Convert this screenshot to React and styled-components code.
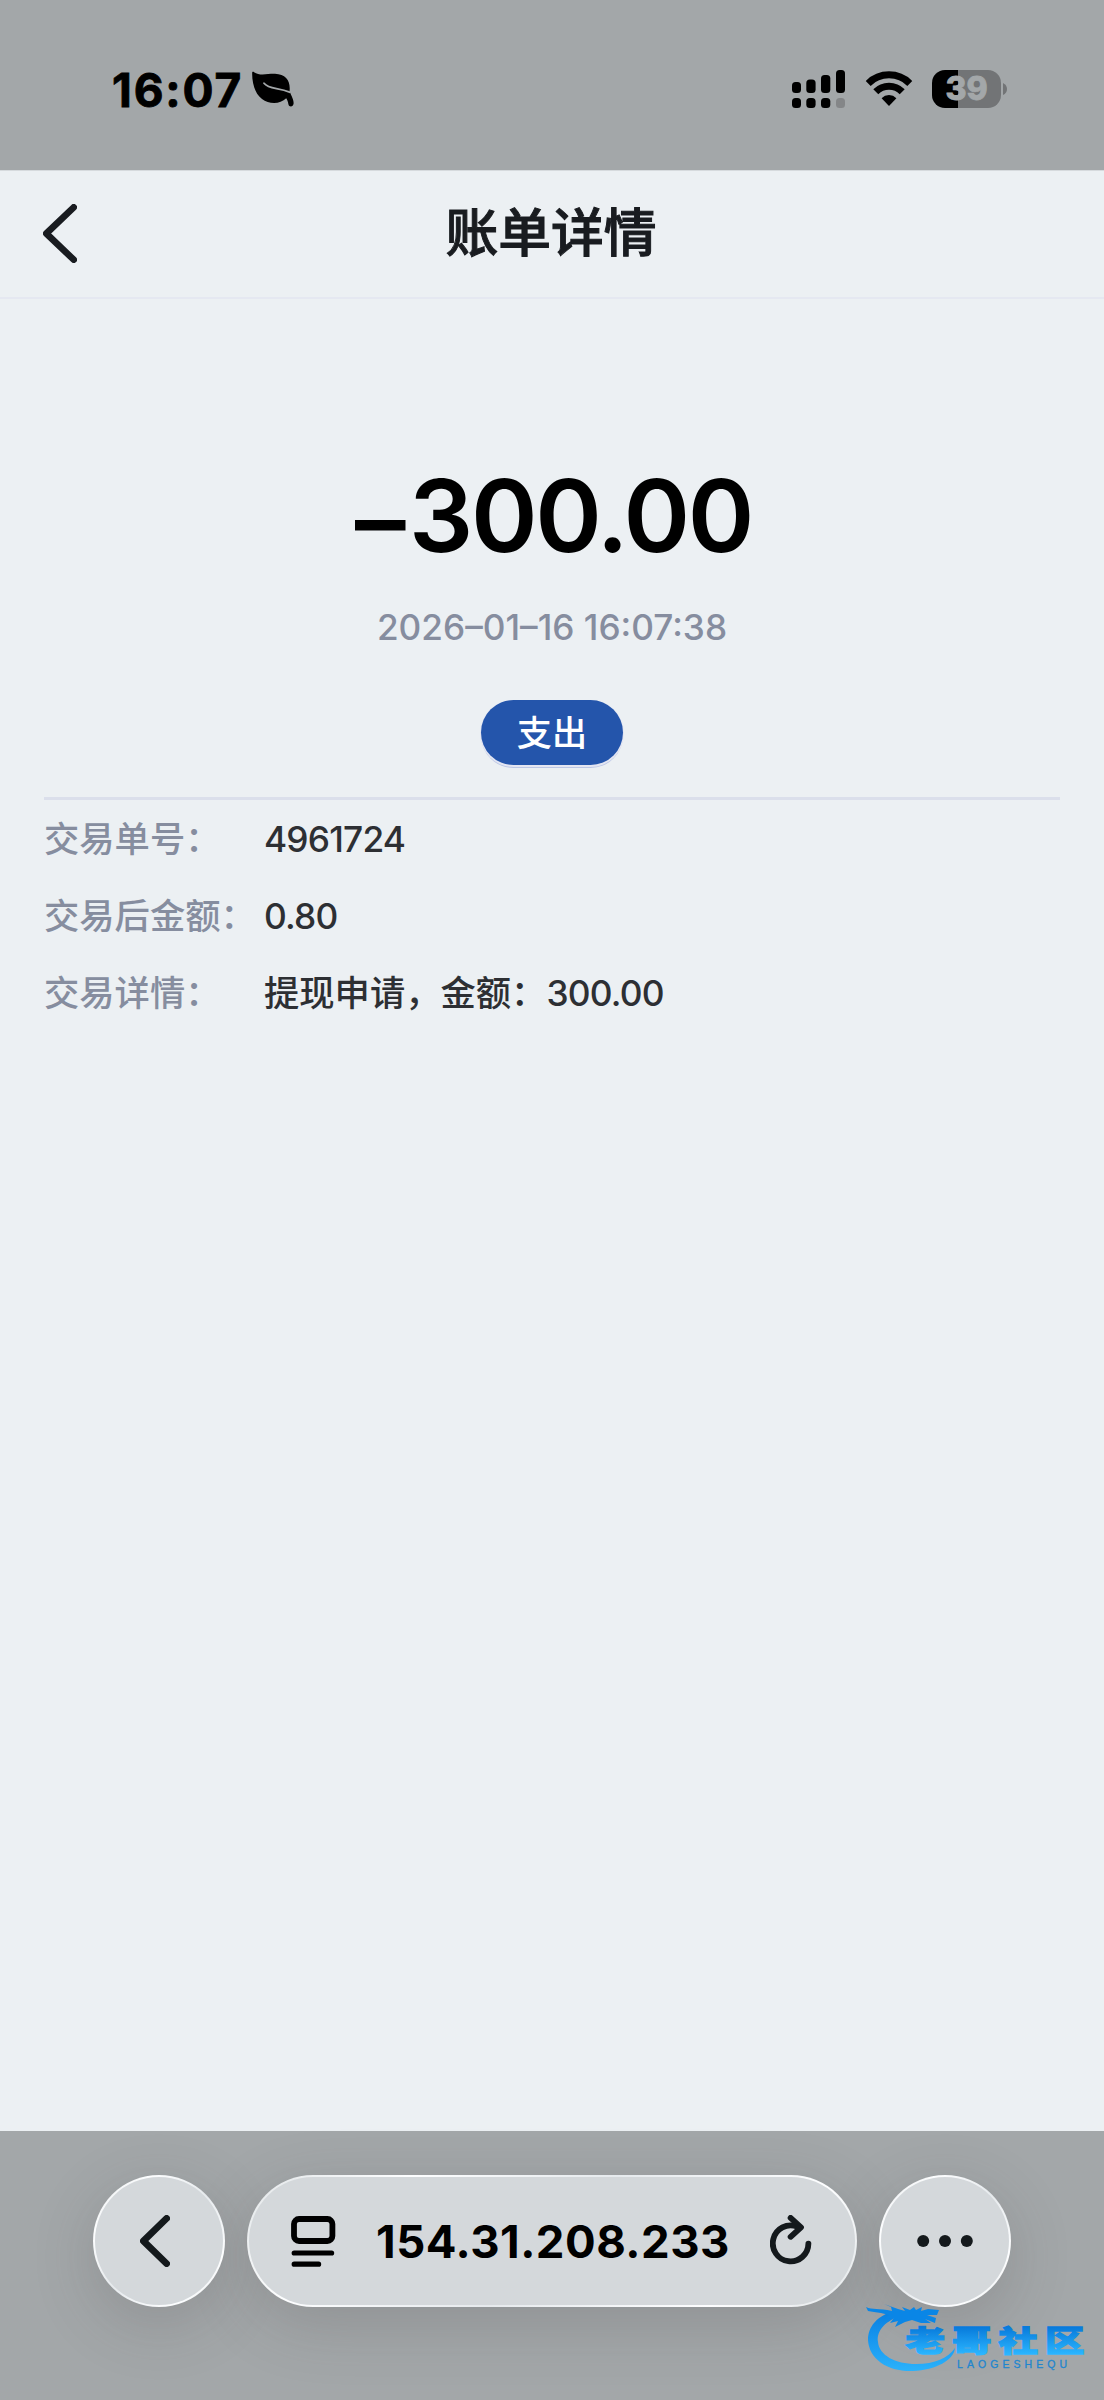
import React from "react";
import styled, { createGlobalStyle } from "styled-components";

const Global = createGlobalStyle`
  * { box-sizing: border-box; }
  body {
    margin: 0;
    background: #ecf0f3;
    font-family: Inter, "Noto Sans CJK SC", sans-serif;
    -webkit-font-smoothing: antialiased;
  }
`;

const Screen = styled.div`
  display: flex;
  flex-direction: column;
  width: 1104px;
  height: 2400px;
  overflow: hidden;
  background: #ecf0f3;
`;

const StatusBar = styled.div`
  display: flex;
  align-items: center;
  justify-content: space-between;
  height: 170px;
  padding: 8px 97px 0 112px;
  background: #a3a7a9;
`;

const StatusGroup = styled.div`
  display: flex;
  align-items: center;
  gap: ${(p) => p.$gap}px;
`;

const Clock = styled.span`
  padding-top: 2px;
  font-size: 46px;
  line-height: 56px;
  font-weight: 700;
  letter-spacing: ${(p) => p.$spacing}px;
  color: #000;
  -webkit-text-stroke: 0.8px #000;
`;

const Battery = styled.div`
  display: flex;
  align-items: center;
  gap: 2px;
`;

const BatteryBody = styled.div`
  display: flex;
  align-items: center;
  justify-content: center;
  width: 69px;
  height: 38px;
  border-radius: 13px;
  background: linear-gradient(90deg, #000 26px, #727476 26px);
  color: #a3a7a9;
  font-size: 32px;
  line-height: 38px;
  font-weight: 800;
  -webkit-text-stroke: 0.8px #a3a7a9;
`;

const Header = styled.header`
  display: grid;
  grid-template-columns: 120px 1fr 120px;
  align-items: center;
  height: 129px;
  padding-bottom: 2px;
  border-top: 1px solid #d6dadd;
  border-bottom: 2px solid #e5e8f1;
`;

const BackSlot = styled.div`
  display: flex;
  padding-left: 43px;
`;

const Title = styled.h1`
  margin: 0 2px 0 0;
  text-align: center;
  font-size: 52.8px;
  line-height: 76px;
  font-weight: 500;
  -webkit-text-stroke: 1px #191c20;
  color: #191c20;
`;

const Main = styled.main`
  display: flex;
  flex-direction: column;
  flex: 1;
  padding: 155px 44px 0;
`;

const Summary = styled.section`
  display: flex;
  flex-direction: column;
  align-items: center;
  height: 346px;
  border-bottom: 3px solid #dbdfeb;
`;

const Amount = styled.div`
  display: flex;
  gap: 6px;
  height: 122px;
  padding-left: 3px;
  font-size: 101px;
  line-height: 122px;
  font-weight: 600;
  letter-spacing: -2.4px;
  color: #000;
`;

const Sign = styled.span`
  padding-top: 4px;
`;

const Timestamp = styled.div`
  margin-top: 29px;
  font-size: 35.2px;
  line-height: 44px;
  font-weight: 500;
  color: #868d9f;
`;

const Badge = styled.div`
  display: flex;
  align-items: center;
  justify-content: center;
  width: 142px;
  height: 65px;
  margin-top: 51px;
  border-radius: 33px;
  background: #2455ab;
  box-shadow: 0 1px 0 1px #e4e6f2, 0 3px 0 0 #bcc7e5;
  color: #fff;
  font-size: 35.2px;
  line-height: 60px;
  font-weight: 500;
`;

const Details = styled.dl`
  display: flex;
  flex-direction: column;
  margin: 1px 0 0;
`;

const DetailRow = styled.div`
  display: grid;
  grid-template-columns: 220px 1fr;
  align-items: center;
  height: 77.4px;
  font-size: 35.3px;
  line-height: 50px;
  font-weight: 500;
`;

const Label = styled.dt`
  color: #868d9f;
  white-space: nowrap;
`;

const Value = styled.dd`
  margin: 0;
  color: #2d2f33;
`;

const Digits = styled.span`
  letter-spacing: -0.8px;
`;

const BrowserBar = styled.nav`
  position: relative;
  isolation: isolate;
  display: flex;
  align-items: flex-start;
  gap: 22px;
  height: 269px;
  padding: 44px 93px 0 93px;
  background: #a3a7a9;
`;

const Glass = styled.div`
  position: relative;
  display: flex;
  align-items: center;
  justify-content: center;
  flex: ${(p) => (p.$wide ? "1" : "0 0 132px")};
  height: 132px;
  padding-right: ${(p) => p.$shift || 0}px;
  border-radius: 66px;
  border: 2px solid transparent;
  background:
    linear-gradient(#d4d8db, #d4d8db) padding-box,
    linear-gradient(135deg, #e2e6e8 0%, #fdfeff 22%, #e6eaed 50%, #fdfeff 80%, #e2e6e8 100%) border-box;

  &::before {
    content: "";
    position: absolute;
    inset: 0;
    z-index: -1;
    border-radius: inherit;
    box-shadow: 0 16px 66px rgba(60, 55, 55, 0.2);
  }
`;

const AddressBar = styled(Glass)`
  justify-content: space-between;
  padding: 0 43px 0 42px;
`;

const Address = styled.span`
  padding-top: 1px;
  font-size: 45.5px;
  line-height: 56px;
  font-weight: 700;
  letter-spacing: ${(p) => p.$spacing}px;
  color: #000;
`;

const Watermark = styled.svg`
  position: absolute;
  left: 864px;
  top: 170px;
`;

const rows = [
  { label: "交易单号：", digits: "4961724" },
  { label: "交易后金额：", digits: "0.80" },
  { label: "交易详情：", text: "提现申请，金额：", digits: "300.00" },
];

function LeafIcon() {
  return (
    <svg width="42" height="36" viewBox="0 0 42 36">
      <path d="M1 .4C7 5.5 15 2.5 23 2.8C34 3.2 38.6 10 37.6 19.8C38 23 42 28 41.6 32.6C41.2 36.2 37 36.4 36.4 33.2C36 30.8 35.4 28.8 34.2 27.2C28 33.4 17 33.2 10 28C2.5 22.4-.2 11 .2 1.2Z" fill="#000" />
      <path d="M12 12.3C17 18.6 26 16.3 37.6 21.2" fill="none" stroke="#a3a7a9" strokeWidth="1.8" strokeLinecap="round" />
    </svg>
  );
}

function SignalIcon() {
  return (
    <svg width="54" height="38" viewBox="0 0 54 38">
      <rect x="0" y="12" width="9" height="11" rx="3.5" />
      <rect x="14.3" y="9.5" width="9.3" height="13.5" rx="3.5" />
      <rect x="29" y="5" width="9.3" height="18" rx="3.5" />
      <rect x="44" y="0" width="9" height="23" rx="3.5" />
      <rect x="0" y="28" width="9" height="10" rx="3.5" />
      <rect x="14.3" y="28" width="9.3" height="10" rx="3.5" />
      <rect x="29" y="28" width="9.3" height="10" rx="3.5" />
      <rect x="44" y="28" width="9" height="10" rx="3.5" fill="#848688" />
    </svg>
  );
}

function WifiIcon() {
  return (
    <svg width="48" height="36" viewBox="0 0 48 36">
      <path d="M3.2 12.4A29.6 29.6 0 0 1 44.8 12.4M10.8 20.8A18.6 18.6 0 0 1 37.2 20.8" fill="none" stroke="#000" strokeWidth="7" />
      <path d="M16.6 27.2A10.4 10.4 0 0 1 31.4 27.2L24 35Z" />
    </svg>
  );
}

function Chevron({ width, height, stroke, color }) {
  const r = stroke / 2;
  return (
    <svg width={width} height={height} viewBox={`0 0 ${width} ${height}`}>
      <path
        d={`M${width - r} ${r}L${r} ${height / 2}L${width - r} ${height - r}`}
        fill="none"
        stroke={color}
        strokeWidth={stroke}
        strokeLinecap="round"
        strokeLinejoin="round"
      />
    </svg>
  );
}

function ReaderIcon() {
  return (
    <svg width="45" height="51" viewBox="0 0 45 51">
      <rect x="3" y="3" width="38.4" height="22" rx="5" fill="none" stroke="#000" strokeWidth="5.8" />
      <path d="M3.2 37H40.6M3.2 48.2H27.6" stroke="#000" strokeWidth="5.2" strokeLinecap="round" />
    </svg>
  );
}

function ReloadIcon() {
  return (
    <svg width="42" height="52" viewBox="0 0 42 52" fill="none" stroke="#14191c" strokeWidth="5.8" strokeLinecap="round" strokeLinejoin="round">
      <path d="M38.4 28.6A17.8 18 0 1 1 27 11.6" />
      <path d="M20.6 2.9L31 12.3L20.6 21.8" />
    </svg>
  );
}

function MoreIcon() {
  return (
    <svg width="56" height="12" viewBox="0 0 56 12" fill="#14191c">
      <circle cx="6.2" cy="6" r="6" />
      <circle cx="28" cy="6" r="6" />
      <circle cx="49.8" cy="6" r="6" />
    </svg>
  );
}

function DragonLogo() {
  return (
    <Watermark width="230" height="76" viewBox="0 0 230 76">
      <defs>
        <linearGradient id="swirl" x1="0" y1="0" x2="0" y2="1">
          <stop offset="0" stopColor="#087fe0" />
          <stop offset="0.5" stopColor="#1898f0" />
          <stop offset="1" stopColor="#2bb2fb" />
        </linearGradient>
        <linearGradient id="word" gradientUnits="userSpaceOnUse" x1="0" y1="-24" x2="0" y2="3">
          <stop offset="0" stopColor="#087bdc" />
          <stop offset="1" stopColor="#2bb6ff" />
        </linearGradient>
      </defs>
      <path
        d="M31 10C13 14 4 26 4 39C5 59 25 71 49 70C72 69 90 59 91 47C84 57 71 63 52 63C31 63 15 54 14 41C12 29 23 19 37 15Z"
        fill="url(#swirl)"
      />
      <path
        d="M2 6C8 9 15 7 28 10L27 6L20 3L34 8L41 10L38 6L46 9L50 6L52 9L58 6L57 10L64 8L75 9L73 14L63 14L72 17L71 22L61 18L67 22L57 22L48 19L41 21L31 26L34 20L26 22L30 17L20 18L25 14L17 12L10 11L4 10Z"
        fill="#0a86e6"
      />
      <g transform="translate(41.5 50.5) scale(1.36 1)" fill="url(#word)" stroke="url(#word)" strokeWidth="1.3">
        <text x="0" y="0" fontFamily="Noto Sans CJK SC, sans-serif" fontWeight="900" fontSize="29" letterSpacing="5.2">老哥社区</text>
      </g>
      <text x="93" y="66.5" fontFamily="Liberation Sans, sans-serif" fontSize="10.5" fill="#1f86cf" stroke="#1f86cf" strokeWidth="0.3" textLength="110">LAOGESHEQU</text>
    </Watermark>
  );
}

export default function App() {
  return (
    <Screen>
      <Global />
      <StatusBar>
        <StatusGroup $gap={9}>
          <Clock $spacing={1.8}>16:07</Clock>
          <LeafIcon />
        </StatusGroup>
        <StatusGroup $gap={19}>
          <SignalIcon />
          <WifiIcon />
          <Battery>
            <BatteryBody>39</BatteryBody>
            <svg width="4" height="12" viewBox="0 0 4 12">
              <path d="M0 0Q4 2 4 6T0 12Z" fill="#727476" />
            </svg>
          </Battery>
        </StatusGroup>
      </StatusBar>
      <Header>
        <BackSlot>
          <Chevron width={34} height={59} stroke={6.6} color="#191c20" />
        </BackSlot>
        <Title>账单详情</Title>
      </Header>
      <Main>
        <Summary>
          <Amount>
            <Sign>–</Sign>
            <span>300.00</span>
          </Amount>
          <Timestamp>2026–01–16 16:07:38</Timestamp>
          <Badge>支出</Badge>
        </Summary>
        <Details>
          {rows.map((row) => (
            <DetailRow key={row.label}>
              <Label>{row.label}</Label>
              <Value>
                {row.text}
                <Digits>{row.digits}</Digits>
              </Value>
            </DetailRow>
          ))}
        </Details>
      </Main>
      <BrowserBar>
        <Glass $shift={8}>
          <Chevron width={30} height={52} stroke={6.8} color="#14191c" />
        </Glass>
        <AddressBar $wide>
          <ReaderIcon />
          <Address $spacing={0.5}>154.31.208.233</Address>
          <ReloadIcon />
        </AddressBar>
        <Glass>
          <MoreIcon />
        </Glass>
        <DragonLogo />
      </BrowserBar>
    </Screen>
  );
}
